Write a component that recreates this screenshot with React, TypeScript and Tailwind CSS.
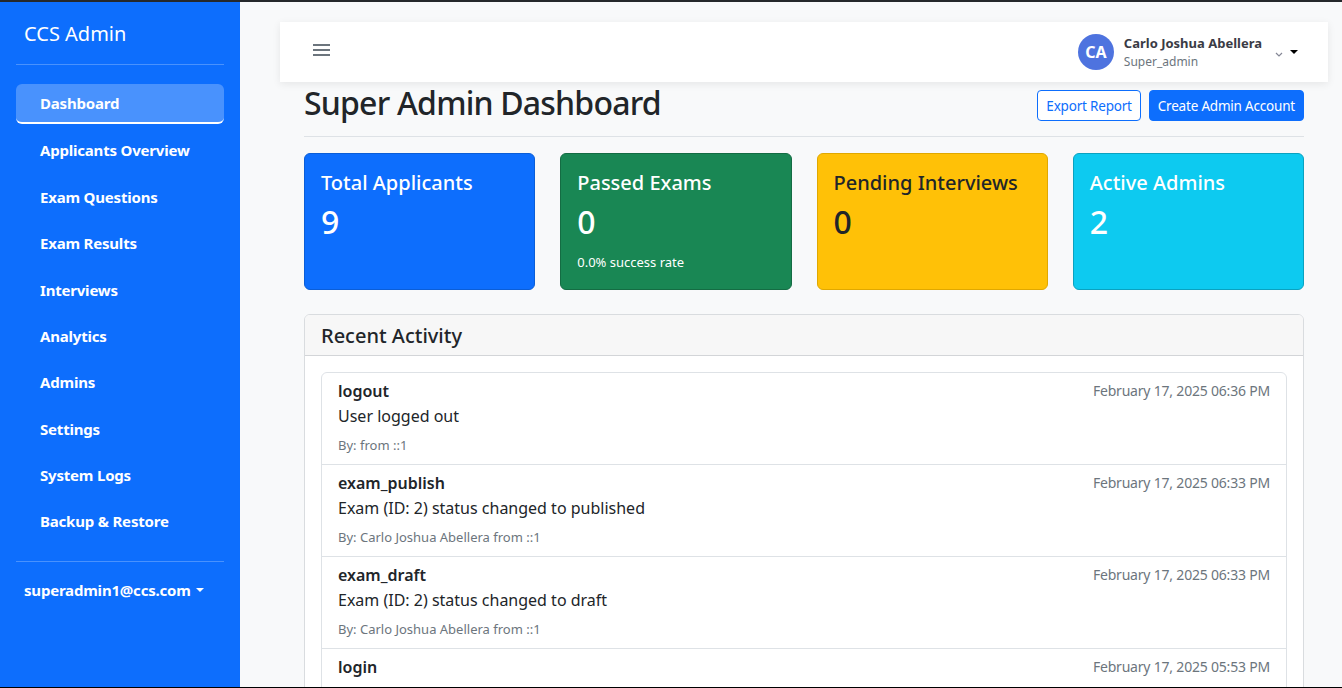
import React from "react";

const font = { fontFamily: '"Segoe UI", "Noto Sans", sans-serif' };

const navItems = [
  "Dashboard",
  "Applicants Overview",
  "Exam Questions",
  "Exam Results",
  "Interviews",
  "Analytics",
  "Admins",
  "Settings",
  "System Logs",
  "Backup & Restore",
];

const activities = [
  { t: "logout", d: "User logged out", by: "By:  from ::1", date: "February 17, 2025 06:36 PM" },
  { t: "exam_publish", d: "Exam (ID: 2) status changed to published", by: "By: Carlo Joshua Abellera from ::1", date: "February 17, 2025 06:33 PM" },
  { t: "exam_draft", d: "Exam (ID: 2) status changed to draft", by: "By: Carlo Joshua Abellera from ::1", date: "February 17, 2025 06:33 PM" },
  { t: "login", d: "", by: "", date: "February 17, 2025 05:53 PM" },
];

export default function App() {
  return (
    <div className="h-[688px] w-[1342px] overflow-hidden border-t-2 border-b border-t-[#25282b] border-b-black bg-[#f8f9fa] flex text-[#212529]" style={font}>
      <aside className="w-[240px] shrink-0 bg-[#0d6efd] text-white px-4 flex flex-col">
        <div className="h-[62px] flex items-center pl-2 text-[20px] leading-none pt-[1px]">CCS Admin</div>
        <div className="h-px bg-white/25" />
        <nav className="mt-[19px] flex flex-col gap-[6px]">
          {navItems.map((n, i) => (
            <div
              key={n}
              className={
                "h-[40.4px] flex items-center pl-6 text-[15px] font-bold rounded-md tracking-[-0.2px] " +
                (i === 0 ? "bg-white/25 border-b-2 border-white" : "")
              }
            >
              {n}
            </div>
          ))}
        </nav>
        <div className="mt-[19px] h-px bg-white/25" />
        <div className="mt-[17px] pl-2 flex items-center text-[15px] font-bold tracking-[-0.2px]">
          superadmin1@ccs.com
          <span className="ml-[5px] inline-block border-x-[4px] border-t-[4px] border-x-transparent border-t-white" />
        </div>
      </aside>

      <main className="flex-1 pl-10 pr-[14px] pt-5">
        <header className="h-[60px] bg-white shadow-[0_2px_8px_rgba(0,0,0,0.08)] flex items-center justify-between pl-[33px] pr-[30px]">
          <svg width="17" height="14" viewBox="0 0 17 14" className="-mt-[5px]">
            <rect x="0" y="1" width="17" height="2" fill="#6c757d" />
            <rect x="0" y="6" width="17" height="2" fill="#6c757d" />
            <rect x="0" y="11" width="17" height="2" fill="#6c757d" />
          </svg>
          <div className="flex items-center">
            <div className="w-9 h-9 rounded-full bg-[#4e73df] text-white flex items-center justify-center text-[16px] font-bold">CA</div>
            <div className="ml-[10px] flex flex-col leading-tight">
              <span className="text-[13px] font-bold text-[#3a3b45]">Carlo Joshua Abellera</span>
              <span className="text-[12px] text-[#6c757d] mt-[2px]">Super_admin</span>
            </div>
            <svg width="10" height="8" viewBox="0 0 10 8" className="ml-[12px] mt-[4px]">
              <path d="M2 3l3 3 3-3" fill="none" stroke="#858796" strokeWidth="1.2" />
            </svg>
            <span className="ml-[6px] inline-block border-x-[4px] border-t-[4px] border-x-transparent border-t-black" />
          </div>
        </header>

        <div className="px-6">
          <div className="flex items-end justify-between pt-[2px] pb-[14px] border-b border-[#dee2e6]">
            <h1 className="text-[32px] font-medium leading-[1.2] tracking-[-0.8px]">Super Admin Dashboard</h1>
            <div className="flex gap-2 mb-[1px]">
              <button className="h-[31px] px-[8px] text-[13.5px] tracking-[-0.2px] text-[#0d6efd] border border-[#0d6efd] rounded bg-white">Export Report</button>
              <button className="h-[31px] px-[8px] text-[13.5px] tracking-[-0.2px] text-white bg-[#0d6efd] border border-[#0d6efd] rounded">Create Admin Account</button>
            </div>
          </div>

          <div className="grid grid-cols-4 gap-[25px] mt-4">
            <StatCard title="Total Applicants" value="9" cls="bg-[#0d6efd] text-white border-[#0b5ed7]" />
            <StatCard title="Passed Exams" value="0" sub="0.0% success rate" cls="bg-[#198754] text-white border-[#146c43]" />
            <StatCard title="Pending Interviews" value="0" cls="bg-[#ffc107] text-[#212529] border-[#e0a800]" />
            <StatCard title="Active Admins" value="2" cls="bg-[#0dcaf0] text-white border-[#0aa2c0]" />
          </div>

          <div className="mt-[24px] bg-white border border-[#d9dcdf] rounded-md overflow-hidden">
            <div className="h-[41px] bg-[#f7f7f7] border-b border-[#d3d5d8] flex items-center px-4 text-[20px] font-medium pt-[1px]">Recent Activity</div>
            <div className="p-4">
              <div className="border border-[#dee2e6] rounded-md">
                {activities.map((a, i) => (
                  <div key={i} className={"px-4 pt-[7px] " + (i > 0 ? "h-[92px] border-t border-[#dee2e6]" : "h-[91px]")}>
                    <div className="flex justify-between items-center">
                      <span className="text-[16px] font-semibold leading-[20px]">{a.t}</span>
                      <span className="text-[14px] text-[#6c757d] tracking-[-0.2px]">{a.date}</span>
                    </div>
                    {a.d && <div className="text-[16px] mt-[4px] leading-[22px]">{a.d}</div>}
                    {a.by && <div className="text-[13px] text-[#6c757d] mt-[9px]">{a.by}</div>}
                  </div>
                ))}
              </div>
            </div>
          </div>
        </div>
      </main>
    </div>
  );
}

function StatCard({ title, value, sub, cls }: { title: string; value: string; sub?: string; cls: string }) {
  return (
    <div className={"h-[137px] rounded-md border px-4 pt-[17px] " + cls}>
      <div className="text-[20px] font-medium leading-[1.2]">{title}</div>
      <div className="text-[32px] font-medium leading-[1.2] mt-[8px]">{value}</div>
      {sub && <div className="text-[13px] mt-[11px]">{sub}</div>}
    </div>
  );
}
